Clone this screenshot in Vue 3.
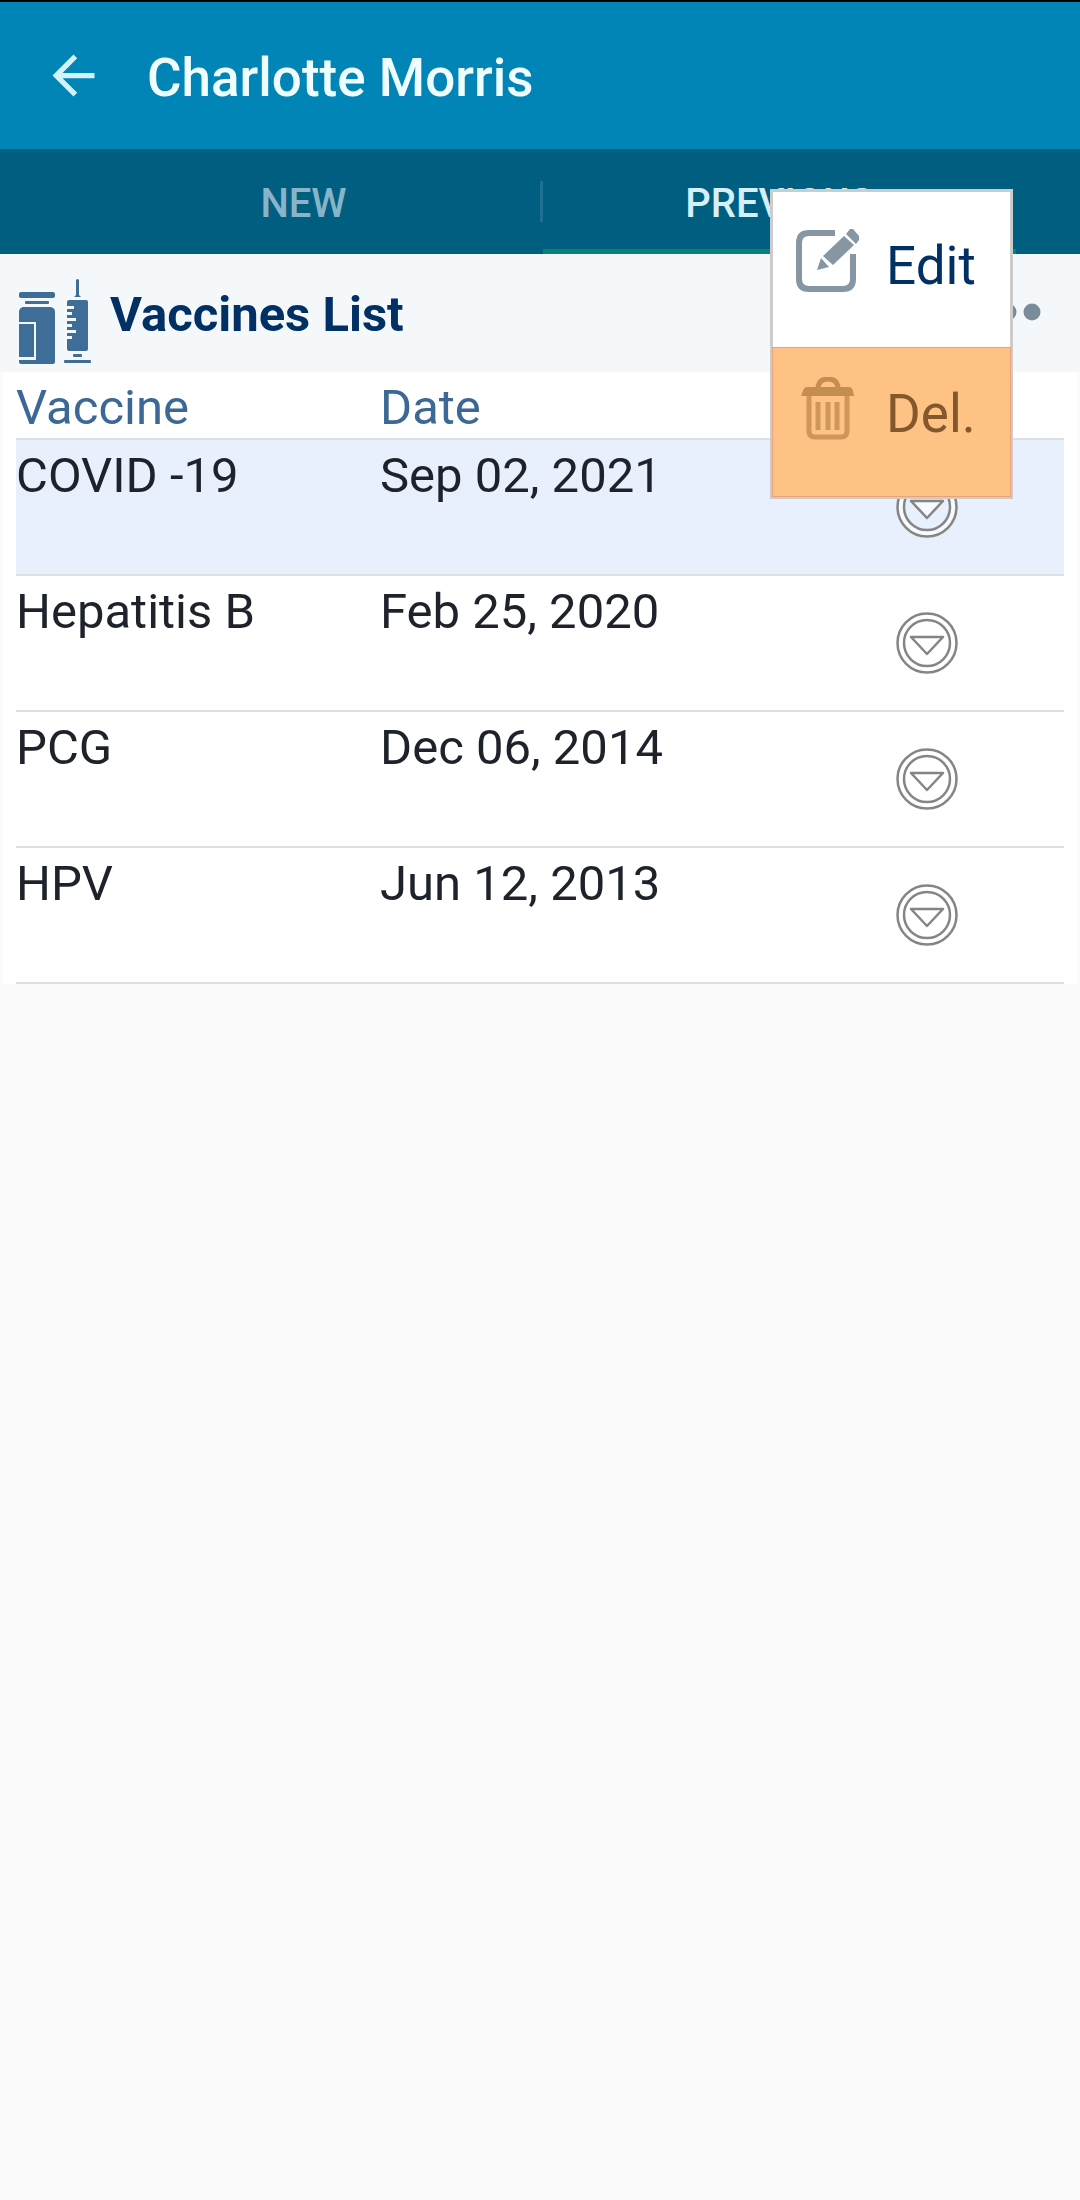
<script setup>
const tabs = { first: 'New', second: 'Previous' }
const vaccines = [
  { name: 'COVID -19', date: 'Sep 02, 2021', selected: true },
  { name: 'Hepatitis B', date: 'Feb 25, 2020', selected: false },
  { name: 'PCG', date: 'Dec 06, 2014', selected: false },
  { name: 'HPV', date: 'Jun 12, 2013', selected: false },
]
</script>

<template>
  <div class="app">
    <header class="app-bar">
      <button class="icon-button back" type="button" aria-label="Back">
        <svg viewBox="0 0 24 24" width="63" height="63" aria-hidden="true">
          <path fill="#d3f3fc" d="M20 11H7.83l5.59-5.59L12 4l-8 8 8 8 1.41-1.41L7.83 13H20v-2z" />
        </svg>
      </button>
      <h1 class="title">Charlotte Morris</h1>
    </header>

    <nav class="tabs" role="tablist">
      <button class="tab" type="button" role="tab" aria-selected="false">{{ tabs.first }}</button>
      <span class="divider"></span>
      <button class="tab active" type="button" role="tab" aria-selected="true">{{ tabs.second }}</button>
    </nav>

    <main>
      <section class="section-bar">
        <svg class="vaccine-icon" viewBox="0 0 74 86" width="74" height="86" aria-hidden="true">
          <g fill="#3e6e98">
            <rect x="1" y="13" width="36" height="6" rx="2" />
            <rect x="7" y="22" width="24" height="3" rx="1" />
            <path d="M5 28h28q4 1 4 5v50q0 2-2 2H3q-2 0-2-2v-2h17V43H1V33q0-4 4-5z" />
            <rect x="1" y="45" width="15" height="33" />
            <path d="M58 1.500q0-1.500 1.500-1.500t1.500 1.500V16l2 2h-7l2-2z" />
            <path d="M51 21h17q2 0 2 2v47q0 2-2 2H51q-2 0-2-2V60h5v-3h-5v-3h9v-3h-9v-3h5v-3h-5v-3h9v-3h-9v-3h5v-3h-5v-3h7v-3h-7V23q0-2 2-2z" />
            <rect x="55" y="75" width="9" height="3" rx="1" />
            <rect x="46" y="81" width="27" height="3" rx="1" />
          </g>
        </svg>
        <h2 class="section-title">Vaccines List</h2>
        <button class="icon-button more" type="button" aria-label="More options">
          <svg viewBox="0 0 66 18" width="66" height="18" aria-hidden="true">
            <g fill="#7b8c99">
              <circle cx="9" cy="9" r="8.500" />
              <circle cx="33" cy="9" r="8.500" />
              <circle cx="57" cy="9" r="8.500" />
            </g>
          </svg>
        </button>

        <div class="menu" role="menu">
          <button class="menu-item" type="button" role="menuitem">
            <svg viewBox="0 0 63 63" width="63" height="63" aria-hidden="true">
              <path d="M39 4H13Q3 4 3 14V50Q3 60 13 60H47Q57 60 57 50V25" fill="none" stroke="#8796a3" stroke-width="6" />
              <g fill="#8796a3">
                <path d="M21 41l4-12 8 9z" />
                <path d="M27 27L48 7l10 9-21 20z" />
                <path d="M50 5l4-5h3l6 7v4l-3 4z" />
              </g>
            </svg>
            <span>Edit</span>
          </button>
          <button class="menu-item pressed" type="button" role="menuitem">
            <svg viewBox="0 0 63 63" width="63" height="63" aria-hidden="true">
              <g fill="none" stroke="#cd975b" stroke-width="5">
                <path d="M22 12Q22 2 32 2t10 10" stroke="#c48d51" />
                <path d="M13 19v35q0 6 6 6h26q6 0 6-6V19" />
                <path d="M22 25v28M32 25v28M41 25v28" />
              </g>
              <path fill="#c48d51" d="M11 10h42q3 0 4 4l1 5H5l2-5q1-4 4-4z" />
            </svg>
            <span>Del.</span>
          </button>
        </div>
      </section>

      <div class="card">
        <table>
          <colgroup>
            <col class="col-name" />
            <col class="col-date" />
            <col class="col-action" />
          </colgroup>
          <thead>
            <tr>
              <th scope="col">Vaccine</th>
              <th scope="col">Date</th>
              <td></td>
            </tr>
          </thead>
          <tbody>
            <tr v-for="v in vaccines" :key="v.name" :class="{ selected: v.selected }">
              <td>{{ v.name }}</td>
              <td>{{ v.date }}</td>
              <td class="action">
                <button class="icon-button" type="button" :aria-label="`Options for ${v.name}`">
                  <svg viewBox="0 0 62 62" width="62" height="62" aria-hidden="true">
                    <circle cx="31" cy="31" r="29.500" fill="#fff" fill-opacity=".65" stroke="#858585" stroke-width="2.500" />
                    <circle class="inner" cx="31" cy="31" r="23" stroke="#858585" stroke-width="2.500" />
                    <path d="M15 25h32L31 42z" fill="#fff" fill-opacity=".65" stroke="#858585" stroke-width="2.500" stroke-linejoin="round" />
                  </svg>
                </button>
              </td>
            </tr>
          </tbody>
        </table>
      </div>
    </main>
  </div>
</template>

<style>
body {
  margin: 0;
  background: #fafafa;
}
</style>

<style scoped>
.app {
  font-family: Roboto, "Liberation Sans", sans-serif;
  color: #1d222b;
}

button {
  border: 0;
  padding: 0;
  background: none;
  font: inherit;
  color: inherit;
  cursor: pointer;
}

svg {
  display: block;
  flex: none;
}

.icon-button {
  display: block;
  flex: none;
}

.app-bar {
  display: flex;
  align-items: center;
  gap: 42px;
  height: 147px;
  padding: 0 42px;
  border-top: 2px solid #000;
  background: #0085b6;
}

.title {
  margin: 0;
  padding-top: 4px;
  font-size: 53px;
  line-height: 64px;
  font-weight: 500;
  color: #f0fdff;
}

.tabs {
  display: flex;
  align-items: center;
  height: 105px;
  padding: 0 64px 0 67px;
  background: #005f80;
}

.tab {
  flex: 1 1 0;
  align-self: stretch;
  box-sizing: border-box;
  padding-top: 4px;
  border-top: 5px solid transparent;
  border-bottom: 5px solid transparent;
  font-size: 40px;
  font-weight: 500;
  text-transform: uppercase;
  color: #87b4c8;
}

.tab.active {
  border-bottom-color: #0d8078;
  color: #d6f0fa;
}

.divider {
  width: 3px;
  height: 41px;
  background: #1f7090;
}

.section-bar {
  position: relative;
  display: flex;
  align-items: center;
  box-sizing: border-box;
  height: 118px;
  padding: 0 39px 2px 18px;
  background: #f4f8fb;
}

.vaccine-icon {
  margin-top: 20px;
}

.section-title {
  flex: 1;
  margin: 0 0 0 18px;
  padding-top: 6px;
  font-size: 49px;
  line-height: 64px;
  font-weight: 700;
  color: #003064;
}

.menu {
  position: absolute;
  top: -65px;
  right: 67px;
  z-index: 1;
  box-sizing: border-box;
  width: 243px;
  padding: 8px 0 0;
  border: 3px solid #ccc;
  background: #fff;
}

.menu-item {
  display: flex;
  align-items: flex-start;
  gap: 27px;
  box-sizing: border-box;
  width: 100%;
  height: 148px;
  padding: 29px 0 0 23px;
  font-size: 53px;
  line-height: 74px;
  color: #003064;
}

.menu-item.pressed {
  background: #ffc285;
  box-shadow: 0 0 0 1px #eda174;
  color: #83582d;
}

.card {
  margin: 0 3px;
  padding: 0 13px;
  background: #fff;
}

table {
  width: 100%;
  table-layout: fixed;
  border-collapse: separate;
  border-spacing: 0;
  font-size: 49px;
  line-height: 58px;
}

.col-name {
  width: 364px;
}

.col-action {
  width: 274px;
}

th,
td {
  box-sizing: border-box;
  padding: 7px 0 0;
  border-bottom: 2px solid #dfdfdf;
  text-align: left;
  vertical-align: top;
  font-weight: 400;
}

thead th,
thead td {
  height: 68px;
  color: #3b6895;
}

tbody td {
  height: 136px;
}

.selected td {
  background: #e8effd;
}

tbody .action {
  padding: 0 0 0 106px;
  vertical-align: middle;
}

.inner {
  fill: #fff;
}

.selected .inner {
  fill: #e8effd;
}
</style>
